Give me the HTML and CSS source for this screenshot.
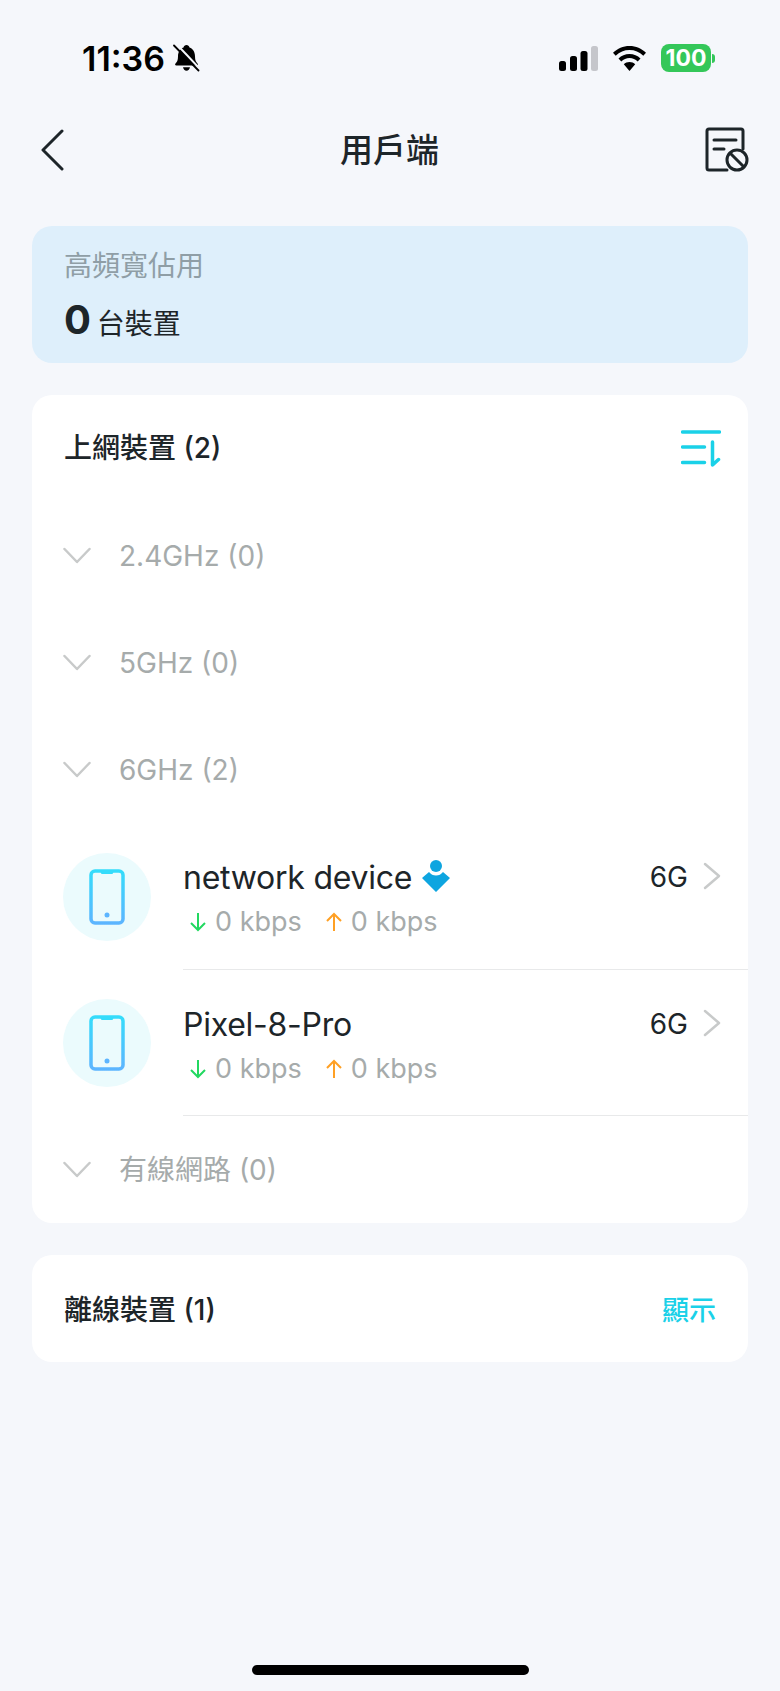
FILE: index.html
```html
<!DOCTYPE html>
<html lang="zh-Hant">

<head>
    <meta charset="UTF-8">
    <meta name="viewport" content="width=device-width, initial-scale=1.0">
    <title>用戶端</title>
    <link rel="stylesheet" href="styles.css">
</head>

<body>
    <!-- Status bar -->
    <div class="status-bar">
        <div class="status-left">
            <span class="clock">11:36</span>
            <svg class="bell" width="27" height="28" viewBox="0 0 27 28">
                <path d="M13.500 1c-1.500 0-2.700 1-3 2.500C7 4.800 5 8 5 12.500c0 3.800-1 5.600-2.500 7-.8.800-.4 2 .8 2h20.400c1.200 0 1.600-1.200.8-2-1.500-1.400-2.500-3.200-2.500-7 0-4.500-2-7.700-5.500-9C16.200 2 15 1 13.500 1zM10 23.300c.3 1.900 1.800 3.400 3.500 3.400s3.200-1.500 3.500-3.400h-7z" fill="#000"/>
                <path d="M3.500 0l23.500 25" stroke="#f5f7fb" stroke-width="2"/>
                <path d="M1 1.500l24.500 25" stroke="#000" stroke-width="1.800" stroke-linecap="round"/>
            </svg>
        </div>
        <div class="status-right">
            <svg width="39" height="25" viewBox="0 0 39 25">
                <rect x="0" y="15" width="7" height="10" rx="2.500" fill="#000"/>
                <rect x="11" y="10" width="7" height="15" rx="2.500" fill="#000"/>
                <rect x="21.500" y="5" width="7" height="20" rx="2.500" fill="#000"/>
                <rect x="32" y="0" width="7" height="25" rx="2.500" fill="#c5c6cb"/>
            </svg>
            <svg width="33" height="25" viewBox="0 0 33 25">
                <path d="M16.500 0C10 0 4.500 2.500 0 6.700l2.700 3C6.500 6 11.200 4 16.500 4s10 2 13.800 5.700l2.700-3C28.500 2.500 23 0 16.500 0z" fill="#000"/>
                <path d="M16.500 8c-4.300 0-8.100 1.700-11 4.500l2.800 3c2.200-2.100 5-3.400 8.200-3.400s6 1.300 8.200 3.400l2.800-3c-2.900-2.800-6.700-4.500-11-4.500z" fill="#000"/>
                <path d="M16.500 16c-2.200 0-4.200.9-5.700 2.300l5.700 6.700 5.700-6.700c-1.500-1.400-3.500-2.300-5.700-2.300z" fill="#000"/>
            </svg>
            <div class="battery">
                <span class="battery-level">100</span>
                <span class="battery-cap"></span>
            </div>
        </div>
    </div>

    <!-- Nav bar -->
    <div class="nav-bar">
        <svg class="nav-back" width="24" height="42" viewBox="0 0 24 42">
            <path d="M22 2L3 21l19 19" fill="none" stroke="#1d2529" stroke-width="3" stroke-linecap="round" stroke-linejoin="round"/>
        </svg>
        <h1 class="nav-title">用戶端</h1>
        <svg class="nav-action" width="44" height="46" viewBox="0 0 44 46">
            <path d="M22 43H4a2 2 0 0 1-2-2V4a2 2 0 0 1 2-2h32a2 2 0 0 1 2 2v18" fill="none" stroke="#1d2529" stroke-width="3" stroke-linecap="round"/>
            <path d="M9 13h22M9 22h10" fill="none" stroke="#1d2529" stroke-width="3" stroke-linecap="round"/>
            <circle cx="32" cy="33" r="10" fill="#f5f7fb" stroke="#1d2529" stroke-width="3"/>
            <path d="M25 26l14 14" stroke="#1d2529" stroke-width="3"/>
        </svg>
    </div>

    <div class="banner">
        <div class="banner-label">高頻寬佔用</div>
        <div class="banner-count"><b>0</b> 台裝置</div>
    </div>

    <div class="card">
        <div class="row card-head">
            <span class="card-title card-title-top">上網裝置 (2)</span>
            <svg width="40" height="37" viewBox="0 0 40 37">
                <path d="M1.500 2h37M1.500 17h22M1.500 32.500h22M31.500 12v23l6-5.500" fill="none" stroke="#1ad1e8" stroke-width="3.500" stroke-linecap="round" stroke-linejoin="round"/>
            </svg>
        </div>

        <div class="row group-row">
            <svg class="chevron-down" width="28" height="18" viewBox="0 0 28 18">
                <path d="M1.500 2L14 15 26.500 2" fill="none" stroke="#c8caca" stroke-width="2.500" stroke-linecap="round" stroke-linejoin="round"/>
            </svg>
            <span class="group-name">2.4GHz (0)</span>
        </div>
        <div class="row group-row">
            <svg class="chevron-down" width="28" height="18" viewBox="0 0 28 18">
                <path d="M1.500 2L14 15 26.500 2" fill="none" stroke="#c8caca" stroke-width="2.500" stroke-linecap="round" stroke-linejoin="round"/>
            </svg>
            <span class="group-name">5GHz (0)</span>
        </div>
        <div class="row group-row">
            <svg class="chevron-down" width="28" height="18" viewBox="0 0 28 18">
                <path d="M1.500 2L14 15 26.500 2" fill="none" stroke="#c8caca" stroke-width="2.500" stroke-linecap="round" stroke-linejoin="round"/>
            </svg>
            <span class="group-name">6GHz (2)</span>
        </div>

        <div class="device device-first">
            <div class="avatar">
                <svg width="36" height="56" viewBox="0 0 36 56">
                    <defs>
                        <linearGradient id="phoneA" x1="0" y1="0" x2="0" y2="1">
                            <stop offset="0" stop-color="#35dcfb"/>
                            <stop offset="1" stop-color="#5cb5ff"/>
                        </linearGradient>
                    </defs>
                    <path d="M6 2h24a4 4 0 0 1 4 4v44a4 4 0 0 1-4 4H6a4 4 0 0 1-4-4V6a4 4 0 0 1 4-4z" fill="none" stroke="url(#phoneA)" stroke-width="3.500"/>
                    <path d="M11 2h14l-1.500 3h-11z" fill="#35dcfb"/>
                    <circle cx="18" cy="46" r="2.500" fill="#5cb5ff"/>
                </svg>
            </div>
            <div class="device-main">
                <div class="device-top">
                    <span class="device-name">network device</span>
                    <svg class="owner-badge" width="28" height="32" viewBox="0 0 28 32">
                        <circle cx="14" cy="6" r="6" fill="#0ea5e0"/>
                        <path d="M0 18l7-6c2 2.500 4 3.500 7 3.500s5-1 7-3.500l7 6-14 14z" fill="#0ea5e0"/>
                    </svg>
                    <span class="device-band">6G</span>
                    <svg class="chevron-right" width="18" height="28" viewBox="0 0 18 28">
                        <path d="M2 2l14 12L2 26" fill="none" stroke="#c8caca" stroke-width="2.500" stroke-linecap="round" stroke-linejoin="round"/>
                    </svg>
                </div>
                <div class="device-rates">
                    <svg class="rate-arrow" width="16" height="20" viewBox="0 0 16 20">
                        <path d="M8 1v17M1 11l7 7 7-7" fill="none" stroke="#22d860" stroke-width="2"/>
                    </svg>
                    <span class="rate">0 kbps</span>
                    <svg class="rate-arrow rate-up" width="16" height="20" viewBox="0 0 16 20">
                        <path d="M8 19V2M1 9l7-7 7 7" fill="none" stroke="#ffa024" stroke-width="2"/>
                    </svg>
                    <span class="rate">0 kbps</span>
                </div>
            </div>
        </div>

        <div class="device">
            <div class="avatar">
                <svg width="36" height="56" viewBox="0 0 36 56">
                    <defs>
                        <linearGradient id="phoneB" x1="0" y1="0" x2="0" y2="1">
                            <stop offset="0" stop-color="#35dcfb"/>
                            <stop offset="1" stop-color="#5cb5ff"/>
                        </linearGradient>
                    </defs>
                    <path d="M6 2h24a4 4 0 0 1 4 4v44a4 4 0 0 1-4 4H6a4 4 0 0 1-4-4V6a4 4 0 0 1 4-4z" fill="none" stroke="url(#phoneB)" stroke-width="3.500"/>
                    <path d="M11 2h14l-1.500 3h-11z" fill="#35dcfb"/>
                    <circle cx="18" cy="46" r="2.500" fill="#5cb5ff"/>
                </svg>
            </div>
            <div class="device-main">
                <div class="device-top">
                    <span class="device-name">Pixel-8-Pro</span>
                    <span class="device-band">6G</span>
                    <svg class="chevron-right" width="18" height="28" viewBox="0 0 18 28">
                        <path d="M2 2l14 12L2 26" fill="none" stroke="#c8caca" stroke-width="2.500" stroke-linecap="round" stroke-linejoin="round"/>
                    </svg>
                </div>
                <div class="device-rates">
                    <svg class="rate-arrow" width="16" height="20" viewBox="0 0 16 20">
                        <path d="M8 1v17M1 11l7 7 7-7" fill="none" stroke="#22d860" stroke-width="2"/>
                    </svg>
                    <span class="rate">0 kbps</span>
                    <svg class="rate-arrow rate-up" width="16" height="20" viewBox="0 0 16 20">
                        <path d="M8 19V2M1 9l7-7 7 7" fill="none" stroke="#ffa024" stroke-width="2"/>
                    </svg>
                    <span class="rate">0 kbps</span>
                </div>
            </div>
        </div>

        <div class="row group-row">
            <svg class="chevron-down" width="28" height="18" viewBox="0 0 28 18">
                <path d="M1.500 2L14 15 26.500 2" fill="none" stroke="#c8caca" stroke-width="2.500" stroke-linecap="round" stroke-linejoin="round"/>
            </svg>
            <span class="group-name group-name-cjk">有線網路 (0)</span>
        </div>
    </div>

    <div class="card">
        <div class="row card-head">
            <span class="card-title">離線裝置 (1)</span>
            <span class="show-link">顯示</span>
        </div>
    </div>

    <div class="home-indicator"></div>
</body>

</html>
```
FILE: styles.css
```css
* {
    box-sizing: border-box;
}

body {
    font-family: Inter, "Noto Sans CJK TC", sans-serif;
    margin: 0;
    height: 1691px;
    overflow: hidden;
    background-color: #f5f7fb;
    color: #1d2529;
    display: flex;
    flex-direction: column;
}

.status-bar {
    height: 116px;
    flex-shrink: 0;
    padding: 0 65px 0 82px;
    display: flex;
    justify-content: space-between;
    align-items: center;
}

.status-left {
    display: flex;
    align-items: center;
    gap: 8px;
}

.clock {
    font-size: 34px;
    font-weight: 600;
    color: #000;
}

.status-right {
    display: flex;
    align-items: center;
    gap: 15px;
}

.battery {
    display: flex;
    align-items: center;
    gap: 1px;
}

.battery-level {
    width: 50px;
    height: 28px;
    border-radius: 8px;
    background-color: #34c759;
    color: #fff;
    font-size: 23px;
    font-weight: 700;
    line-height: 28px;
    text-align: center;
}

.battery-cap {
    width: 3px;
    height: 9px;
    border-radius: 0 3px 3px 0;
    background-color: #34c759;
}

.nav-bar {
    height: 68px;
    flex-shrink: 0;
    padding: 0 31px 0 40px;
    display: flex;
    justify-content: space-between;
    align-items: center;
}

.nav-title {
    flex: 1;
    margin: 0;
    padding: 0 0 4px 10px;
    font-size: 33px;
    font-weight: 500;
    text-align: center;
}

.banner {
    margin: 42px 32px 0;
    height: 137px;
    flex-shrink: 0;
    padding: 20px 32px 0;
    background-color: #deeffb;
    border-radius: 20px;
}

.banner-label {
    font-size: 28px;
    line-height: 40px;
    color: #8f9ea6;
}

.banner-count {
    margin-top: 10px;
    font-size: 28px;
    line-height: 48px;
    word-spacing: -2px;
}

.banner-count b {
    font-size: 40px;
    font-weight: 700;
}

.card {
    margin: 32px 32px 0;
    flex-shrink: 0;
    background: #ffffff;
    border-radius: 20px;
}

.row {
    height: 107px;
    display: flex;
    align-items: center;
    padding: 0 27px 0 32px;
}

.card-head {
    justify-content: space-between;
}

.card-title {
    margin-bottom: 2px;
    font-size: 28px;
    font-weight: 500;
}

.card-title-top {
    margin-bottom: 6px;
}

.show-link {
    font-size: 27px;
    font-weight: 500;
    color: #1ad1e8;
    margin-right: 5px;
}

.group-row {
    padding-left: 31px;
    gap: 28px;
}

.group-name {
    font-size: 28px;
    color: #a6abab;
}

.group-name-cjk {
    margin-bottom: 3px;
}

.device {
    height: 146px;
    padding-left: 31px;
    display: flex;
    align-items: center;
}

.device-first {
    height: 147px;
}

.avatar {
    width: 88px;
    height: 88px;
    flex-shrink: 0;
    border-radius: 50%;
    background-color: #ebfbfd;
    display: flex;
    justify-content: center;
    align-items: center;
}

.device-main {
    flex: 1;
    height: 100%;
    margin-left: 32px;
    padding: 34px 27px 0 0;
    border-bottom: 1px solid #e8e9ea;
}

.device-top {
    height: 40px;
    display: flex;
    align-items: center;
}

.device-name {
    font-size: 32px;
    letter-spacing: -0.25px;
}

.owner-badge {
    margin: -3px 0 0 10px;
}

.device-band {
    margin-left: auto;
    margin-right: 15px;
    font-size: 28px;
}

.chevron-right {
    margin-top: -3px;
}

.device-rates {
    margin-top: 8px;
    display: flex;
    align-items: center;
}

.rate-arrow {
    margin-left: 7px;
    margin-right: 9px;
}

.rate-up {
    margin-left: 24px;
}

.rate {
    font-size: 27px;
    color: #a6abab;
}

.home-indicator {
    width: 277px;
    height: 10px;
    margin: auto auto 16px;
    border-radius: 5px;
    background-color: #000;
}
```
